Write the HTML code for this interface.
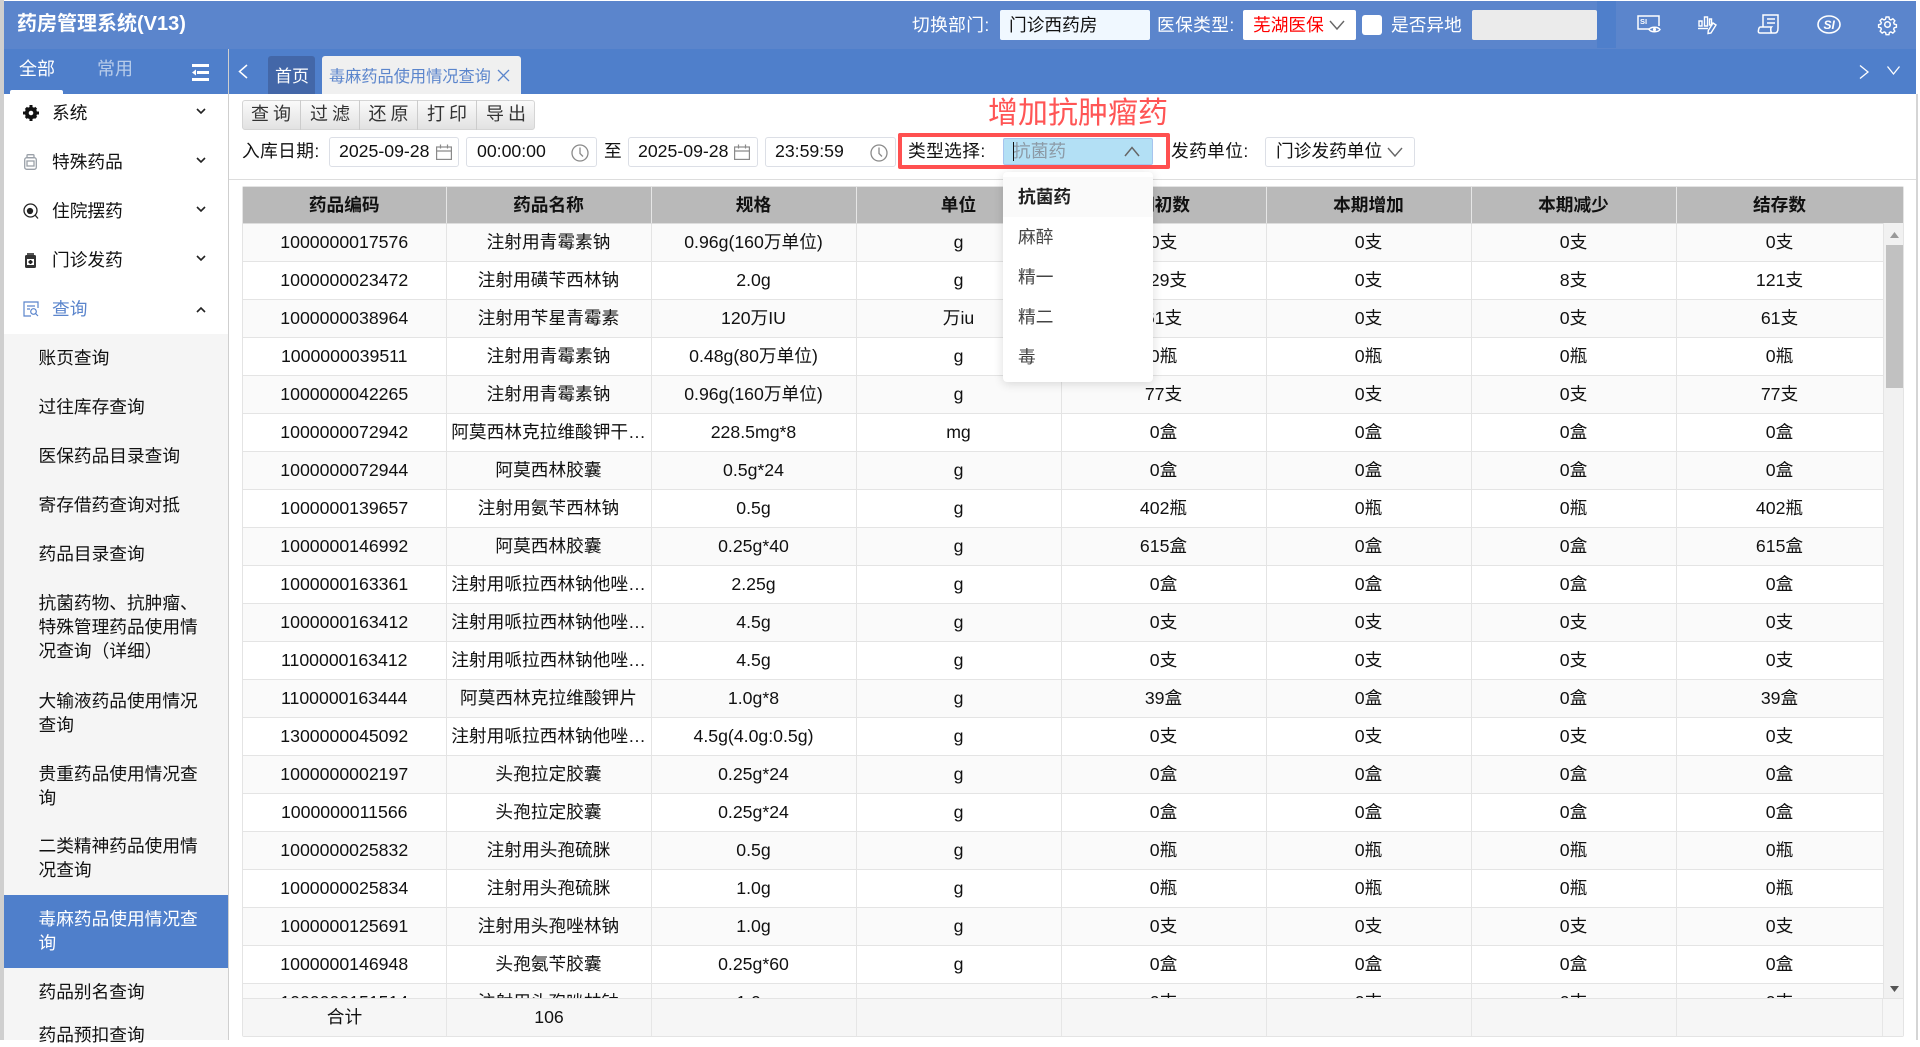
<!DOCTYPE html>
<html lang="zh"><head><meta charset="utf-8"><title>药房管理系统</title>
<style>
*{box-sizing:border-box}
html,body{margin:0;padding:0;width:1920px;height:1040px;overflow:hidden;background:#fff;font-family:"Liberation Sans","Noto Sans CJK SC",sans-serif;font-size:17.7px;color:#111}
.a{position:absolute}
.t{position:absolute;white-space:nowrap;line-height:24px}
.l{letter-spacing:.4px}
.box{position:absolute;background:#fff;border:1px solid #dcdfe6;border-radius:3px}
svg{position:absolute;display:block;overflow:visible}
table{position:absolute;left:243px;top:187px;width:1640px;border-collapse:collapse;table-layout:fixed}
td,th{height:38px;padding:0 2px;text-align:center;border-right:1px solid #e4e4e4;border-bottom:1px solid #e4e4e4;white-space:nowrap;overflow:hidden;font-weight:400;line-height:24px;color:#111}
th{height:36px;background:#b9b9b9;color:#111;font-weight:700;border-right:1px solid #e6e6e6;border-bottom:1px solid #ddd}
tr:nth-child(odd) td{background:#fff}
tr:nth-child(even) td{background:#fafafa}
.btn{position:absolute;top:100px;height:30px;line-height:29px;text-align:center;letter-spacing:4px;text-indent:4px;border-right:1px solid #ccc;color:#333;font-size:18px}
.sub{color:#111;left:38.5px;line-height:24px}
</style></head><body>

<!-- left / right strips -->
<div class="a" style="left:0;top:0;width:4px;height:1040px;background:#cfcfcf"></div>
<div class="a" style="left:1916px;top:94px;width:2px;height:946px;background:#d5d5d5"></div>

<!-- header -->
<div class="a" style="left:4px;top:1px;width:1912px;height:48px;background:#5b85cc"></div>
<div class="a" style="left:1597px;top:1px;width:19px;height:47px;background:#4f7fcb"></div>
<div class="t" style="left:17px;top:12px;font-size:20px;font-weight:700;color:#fff">药房管理系统(V13)</div>
<div class="t l" style="left:912px;top:13px;color:#fff">切换部门:</div>
<div class="a" style="left:1000px;top:10px;width:150px;height:30px;background:#f0f8ff;border-radius:2px"></div>
<div class="t" style="left:1009px;top:13px;color:#111">门诊西药房</div>
<div class="t l" style="left:1157px;top:13px;color:#fff">医保类型:</div>
<div class="a" style="left:1243px;top:10px;width:113px;height:30px;background:#fff;border-radius:2px"></div>
<div class="t" style="left:1253px;top:13px;color:#f00">芜湖医保</div>
<svg style="left:1329px;top:20px" width="16" height="10" viewBox="0 0 16 10"><path d="M1 1l7 8 7-8" fill="none" stroke="#666" stroke-width="1.4"/></svg>
<div class="a" style="left:1362px;top:15px;width:20px;height:20px;background:#fff;border-radius:3px"></div>
<div class="t" style="left:1391px;top:13px;color:#fff">是否异地</div>
<div class="a" style="left:1472px;top:10px;width:125px;height:30px;background:#ebebeb;border-radius:2px"></div>

<!-- header icons -->
<svg style="left:1637px;top:15px" width="24" height="19" viewBox="0 0 24 19" fill="none" stroke="#fff" stroke-width="1.5"><path d="M12 14H1V1h21v10"/><text x="3" y="9" font-size="7.5" font-weight="700" fill="#fff" stroke="none" font-family="Liberation Sans">SI</text><path d="M12 14.5c2-3 9-3 11 0-2 3-9 3-11 0z"/><circle cx="17.5" cy="14.5" r="1.6" fill="#fff" stroke="none"/></svg>
<svg style="left:1698px;top:15px" width="20" height="19" viewBox="0 0 20 19" fill="none" stroke="#fff" stroke-width="1.4"><path d="M1 6h3v5H1zM6.500 2h3v9h-3zM11.500 4h2v6h-2z"/><path d="M0 13.500h10" /><path d="M15 8l3 2-5 8-3 .5.300-3z"/></svg>
<svg style="left:1758px;top:14px" width="21" height="20" viewBox="0 0 21 20" fill="none" stroke="#fff" stroke-width="1.5"><path d="M5 13V1h15v13c0 3-1 5-3 5H2c-1.500 0-2-1-1.500-3 .3-2 1-3 2-3h11c-1 1-1 4 0 6"/><path d="M9 5h8M9 9h8"/></svg>
<svg style="left:1817px;top:15px" width="24" height="19" viewBox="0 0 24 19" fill="none" stroke="#fff" stroke-width="1.6"><ellipse cx="12" cy="9.500" rx="11" ry="8.500"/><text x="6.500" y="14" font-size="12" font-weight="700" font-style="italic" fill="#fff" stroke="none" font-family="Liberation Sans">SI</text></svg>
<svg style="left:1878px;top:15px" width="19" height="19" viewBox="0 0 24 24" fill="none" stroke="#fff" stroke-width="2"><circle cx="12" cy="12" r="3.500"/><path d="M10 1.500h4l.7 3.200 2 .9 2.800-1.700 2.800 2.800-1.700 2.800.9 2 3 .7v3.600l-3 .7-.9 2 1.700 2.800-2.800 2.800-2.800-1.700-2 .9-.7 3h-4l-.7-3-2-.9-2.800 1.700-2.800-2.800 1.700-2.800-.9-2-3-.7v-3.600l3-.7.9-2L1.500 6.700 4.300 3.900l2.800 1.700 2-.9z" transform="translate(1.200 1.200) scale(.9)"/></svg>

<!-- tabs bar -->
<div class="a" style="left:4px;top:49px;width:224px;height:45px;background:#4f7fcb"></div>
<div class="a" style="left:229px;top:49px;width:1687px;height:45px;background:#4f7fcb"></div>
<div class="a" style="left:228px;top:49px;width:1px;height:991px;background:#cfcfcf"></div>
<div class="t" style="left:19px;top:57px;font-size:18px;color:#fff">全部</div>
<div class="t" style="left:97px;top:57px;font-size:18px;color:rgba(255,255,255,.6)">常用</div>
<div class="a" style="left:10px;top:90px;width:53px;height:4px;background:#fff;border-radius:2px 2px 0 0"></div>
<svg style="left:192px;top:64px" width="17" height="17" viewBox="0 0 17 17" fill="#fff"><rect x="0" y="0" width="17" height="3"/><rect x="5" y="7" width="12" height="3"/><rect x="0" y="14" width="17" height="3"/><path d="M4 5.500v6L0 8.500z"/></svg>
<svg style="left:238px;top:64px" width="10" height="15" viewBox="0 0 10 15"><path d="M9 1L1.500 7.500 9 14" fill="none" stroke="#fff" stroke-width="1.500"/></svg>
<div class="a" style="left:268px;top:56px;width:47px;height:38px;background:#4367a8;border-radius:3px 3px 0 0"></div>
<div class="t" style="left:275px;top:65px;font-size:17px;color:#fff">首页</div>
<div class="a" style="left:322px;top:56px;width:199px;height:38px;background:#f0f0f0;border-radius:3px 3px 0 0"></div>
<div class="t" style="left:329px;top:65px;font-size:16.200px;color:#5b85cc">毒麻药品使用情况查询</div>
<svg style="left:497px;top:69px" width="13" height="13" viewBox="0 0 13 13"><path d="M1 1l11 11M12 1L1 12" stroke="#5b85cc" stroke-width="1.300"/></svg>
<svg style="left:1859px;top:65px" width="10" height="14" viewBox="0 0 10 14"><path d="M1 .5L9 7l-8 6.500" fill="none" stroke="#fff" stroke-width="1.300"/></svg>
<svg style="left:1887px;top:66px" width="13" height="9" viewBox="0 0 13 9"><path d="M.5 .5L6.500 8 12.500 .5" fill="none" stroke="#fff" stroke-width="1.300"/></svg>

<!-- sidebar -->
<svg style="left:23px;top:105px" width="16" height="16" viewBox="0 0 16 16"><circle cx="8" cy="8" r="4.200" fill="none" stroke="#111" stroke-width="3.800"/><path d="M6.500 0h3v3h-3zM6.500 13h3v3h-3zM0 6.500h3v3H0zM13 6.500h3v3h-3zM1.800 4l2.200-2.200 2 2-2.200 2.200zM10 12l2.200-2.200 2 2-2.200 2.200zM10 4l2.200-2.200 2 2-2.200 2.200zM1.800 12l2.200-2.200 2 2-2.200 2.200z" fill="#111"/></svg>
<div class="t" style="left:52px;top:101px">系统</div>
<svg style="left:24px;top:154px" width="13" height="16" viewBox="0 0 13 16" fill="none" stroke="#9aa0a8" stroke-width="1.300"><rect x="3" y=".7" width="7" height="3" rx="1"/><rect x=".7" y="3.700" width="11.600" height="11.600" rx="2"/><rect x="3" y="7" width="7" height="5"/></svg>
<div class="t" style="left:52px;top:150px">特殊药品</div>
<svg style="left:23px;top:203px" width="16" height="16" viewBox="0 0 16 16" fill="none" stroke="#222" stroke-width="1.300"><circle cx="7.500" cy="7.500" r="6.500"/><path d="M12 12l3 3.500"/><circle cx="7" cy="8" r="2.500" fill="#222"/></svg>
<div class="t" style="left:52px;top:199px">住院摆药</div>
<svg style="left:25px;top:253px" width="11" height="15" viewBox="0 0 11 15"><rect x="0" y="2" width="11" height="13" rx="1.500" fill="#333"/><rect x="2" y="0" width="7" height="2" fill="#555"/><rect x="2" y="6" width="7" height="6" fill="#fff"/><path d="M4.500 7h2v1h1v2h-1v1h-2v-1h-1V8h1z" fill="#222"/></svg>
<div class="t" style="left:52px;top:248px">门诊发药</div>
<svg style="left:23px;top:301px" width="16" height="16" viewBox="0 0 16 16" fill="none" stroke="#5b85cc" stroke-width="1.200"><path d="M15 7V1H1v14h7"/><path d="M4 5h8M4 8h3"/><circle cx="10.500" cy="10.500" r="2.800"/><path d="M12.500 12.500l2.500 2.500"/></svg>
<div class="t" style="left:52px;top:297px;color:#5b85cc">查询</div>
<svg style="left:196px;top:108px" width="10" height="7" viewBox="0 0 10 7"><path d="M1 1l4 4 4-4" fill="none" stroke="#222" stroke-width="1.600"/></svg>
<svg style="left:196px;top:157px" width="10" height="7" viewBox="0 0 10 7"><path d="M1 1l4 4 4-4" fill="none" stroke="#222" stroke-width="1.600"/></svg>
<svg style="left:196px;top:206px" width="10" height="7" viewBox="0 0 10 7"><path d="M1 1l4 4 4-4" fill="none" stroke="#222" stroke-width="1.600"/></svg>
<svg style="left:196px;top:255px" width="10" height="7" viewBox="0 0 10 7"><path d="M1 1l4 4 4-4" fill="none" stroke="#222" stroke-width="1.600"/></svg>
<svg style="left:196px;top:306px" width="10" height="7" viewBox="0 0 10 7"><path d="M1 6l4-4 4 4" fill="none" stroke="#222" stroke-width="1.600"/></svg>

<div class="a" style="left:4px;top:334px;width:224px;height:706px;background:#f5f5f5;overflow:hidden">
<div class="a" style="left:0;top:561px;width:224px;height:73px;background:#4f7fcb"></div>
</div>
<div class="t sub" style="top:346px">账页查询</div>
<div class="t sub" style="top:395px">过往库存查询</div>
<div class="t sub" style="top:444px">医保药品目录查询</div>
<div class="t sub" style="top:493px">寄存借药查询对抵</div>
<div class="t sub" style="top:542px">药品目录查询</div>
<div class="t sub" style="top:591px">抗菌药物、抗肿瘤、<br>特殊管理药品使用情<br>况查询（详细）</div>
<div class="t sub" style="top:689px">大输液药品使用情况<br>查询</div>
<div class="t sub" style="top:762px">贵重药品使用情况查<br>询</div>
<div class="t sub" style="top:834px">二类精神药品使用情<br>况查询</div>
<div class="t sub" style="top:907px;color:#fff">毒麻药品使用情况查<br>询</div>
<div class="t sub" style="top:980px">药品别名查询</div>
<div class="t sub" style="top:1023px">药品预扣查询</div>

<!-- toolbar -->
<div class="a" style="left:242px;top:100px;width:293px;height:30px;border:1px solid #d5d5d5;border-radius:3px;background:linear-gradient(#fafafa,#e2e2e2)"></div>
<div class="btn" style="left:242px;width:59px">查询</div>
<div class="btn" style="left:301px;width:59px">过滤</div>
<div class="btn" style="left:360px;width:58px">还原</div>
<div class="btn" style="left:418px;width:59px">打印</div>
<div class="btn" style="left:477px;width:58px;border-right:0">导出</div>

<!-- filters -->
<div class="t l" style="left:242px;top:139px">入库日期:</div>
<div class="box" style="left:329px;top:137px;width:130px;height:30px"></div>
<div class="t" style="left:339px;top:139px">2025-09-28</div>
<svg style="left:436px;top:144px" width="16" height="16" viewBox="0 0 16 16" fill="none" stroke="#8a8a8a" stroke-width="1.200"><rect x=".6" y="3" width="14.800" height="12.400"/><path d="M.6 7h14.800M4.500 .5v4M11.500 .5v4"/></svg>
<div class="box" style="left:466px;top:137px;width:131px;height:30px"></div>
<div class="t" style="left:477px;top:139px">00:00:00</div>
<svg style="left:571px;top:144px" width="18" height="18" viewBox="0 0 18 18" fill="none" stroke="#8a8a8a" stroke-width="1.300"><circle cx="9" cy="9" r="8"/><path d="M9 3.500V9.500l3 3"/></svg>
<div class="t" style="left:604px;top:139px">至</div>
<div class="box" style="left:628px;top:137px;width:130px;height:30px"></div>
<div class="t" style="left:638px;top:139px">2025-09-28</div>
<svg style="left:734px;top:144px" width="16" height="16" viewBox="0 0 16 16" fill="none" stroke="#8a8a8a" stroke-width="1.200"><rect x=".6" y="3" width="14.800" height="12.400"/><path d="M.6 7h14.800M4.500 .5v4M11.500 .5v4"/></svg>
<div class="box" style="left:765px;top:137px;width:131px;height:30px"></div>
<div class="t" style="left:775px;top:139px">23:59:59</div>
<svg style="left:870px;top:144px" width="18" height="18" viewBox="0 0 18 18" fill="none" stroke="#8a8a8a" stroke-width="1.300"><circle cx="9" cy="9" r="8"/><path d="M9 3.500V9.500l3 3"/></svg>

<div class="t l" style="left:908px;top:139px">类型选择:</div>
<div class="a" style="left:1003px;top:138px;width:150px;height:27px;background:#b3e0f5;border:1px solid #a6c4ee;border-radius:2px"></div>
<div class="t" style="left:1013px;top:139px;color:#8c9aa6">抗菌药</div>
<div class="a" style="left:1013px;top:142px;width:1px;height:19px;background:#111"></div>
<svg style="left:1124px;top:146px" width="16" height="11" viewBox="0 0 16 11"><path d="M1 10l7-8.500 7 8.500" fill="none" stroke="#666" stroke-width="1.500"/></svg>
<div class="a" style="left:898px;top:133px;width:272px;height:36px;border:4px solid #ff5050;border-radius:2px"></div>
<div class="t" style="left:988px;top:99px;font-size:30px;line-height:30px;color:#f55">增加抗肿瘤药</div>

<div class="t l" style="left:1171px;top:139px">发药单位:</div>
<div class="box" style="left:1265px;top:137px;width:150px;height:30px"></div>
<div class="t" style="left:1276px;top:139px">门诊发药单位</div>
<svg style="left:1387px;top:147px" width="16" height="10" viewBox="0 0 16 10"><path d="M1 1l7 8 7-8" fill="none" stroke="#666" stroke-width="1.400"/></svg>

<div class="a" style="left:229px;top:179px;width:1687px;height:1px;background:#ddd"></div>

<!-- table -->
<div class="a" style="left:242px;top:186px;width:1662px;height:851px;border:1px solid #e4e4e4;border-radius:2px"></div>
<div class="a" style="left:243px;top:187px;width:1640px;height:811px;overflow:hidden">
<table style="left:0;top:0">
<colgroup><col style="width:203px"><col style="width:205px"><col style="width:205px"><col style="width:205px"><col style="width:205px"><col style="width:205px"><col style="width:205px"><col style="width:207px"></colgroup>
<tr><th>药品编码</th><th>药品名称</th><th>规格</th><th>单位</th><th>期初数</th><th>本期增加</th><th>本期减少</th><th>结存数</th></tr>
<tr><td>1000000017576</td><td>注射用青霉素钠</td><td>0.96g(160万单位)</td><td>g</td><td>0支</td><td>0支</td><td>0支</td><td>0支</td></tr>
<tr><td>1000000023472</td><td>注射用磺苄西林钠</td><td>2.0g</td><td>g</td><td>129支</td><td>0支</td><td>8支</td><td>121支</td></tr>
<tr><td>1000000038964</td><td>注射用苄星青霉素</td><td>120万IU</td><td>万iu</td><td>61支</td><td>0支</td><td>0支</td><td>61支</td></tr>
<tr><td>1000000039511</td><td>注射用青霉素钠</td><td>0.48g(80万单位)</td><td>g</td><td>0瓶</td><td>0瓶</td><td>0瓶</td><td>0瓶</td></tr>
<tr><td>1000000042265</td><td>注射用青霉素钠</td><td>0.96g(160万单位)</td><td>g</td><td>77支</td><td>0支</td><td>0支</td><td>77支</td></tr>
<tr><td>1000000072942</td><td>阿莫西林克拉维酸钾干…</td><td>228.5mg*8</td><td>mg</td><td>0盒</td><td>0盒</td><td>0盒</td><td>0盒</td></tr>
<tr><td>1000000072944</td><td>阿莫西林胶囊</td><td>0.5g*24</td><td>g</td><td>0盒</td><td>0盒</td><td>0盒</td><td>0盒</td></tr>
<tr><td>1000000139657</td><td>注射用氨苄西林钠</td><td>0.5g</td><td>g</td><td>402瓶</td><td>0瓶</td><td>0瓶</td><td>402瓶</td></tr>
<tr><td>1000000146992</td><td>阿莫西林胶囊</td><td>0.25g*40</td><td>g</td><td>615盒</td><td>0盒</td><td>0盒</td><td>615盒</td></tr>
<tr><td>1000000163361</td><td>注射用哌拉西林钠他唑…</td><td>2.25g</td><td>g</td><td>0盒</td><td>0盒</td><td>0盒</td><td>0盒</td></tr>
<tr><td>1000000163412</td><td>注射用哌拉西林钠他唑…</td><td>4.5g</td><td>g</td><td>0支</td><td>0支</td><td>0支</td><td>0支</td></tr>
<tr><td>1100000163412</td><td>注射用哌拉西林钠他唑…</td><td>4.5g</td><td>g</td><td>0支</td><td>0支</td><td>0支</td><td>0支</td></tr>
<tr><td>1100000163444</td><td>阿莫西林克拉维酸钾片</td><td>1.0g*8</td><td>g</td><td>39盒</td><td>0盒</td><td>0盒</td><td>39盒</td></tr>
<tr><td>1300000045092</td><td>注射用哌拉西林钠他唑…</td><td>4.5g(4.0g:0.5g)</td><td>g</td><td>0支</td><td>0支</td><td>0支</td><td>0支</td></tr>
<tr><td>1000000002197</td><td>头孢拉定胶囊</td><td>0.25g*24</td><td>g</td><td>0盒</td><td>0盒</td><td>0盒</td><td>0盒</td></tr>
<tr><td>1000000011566</td><td>头孢拉定胶囊</td><td>0.25g*24</td><td>g</td><td>0盒</td><td>0盒</td><td>0盒</td><td>0盒</td></tr>
<tr><td>1000000025832</td><td>注射用头孢硫脒</td><td>0.5g</td><td>g</td><td>0瓶</td><td>0瓶</td><td>0瓶</td><td>0瓶</td></tr>
<tr><td>1000000025834</td><td>注射用头孢硫脒</td><td>1.0g</td><td>g</td><td>0瓶</td><td>0瓶</td><td>0瓶</td><td>0瓶</td></tr>
<tr><td>1000000125691</td><td>注射用头孢唑林钠</td><td>1.0g</td><td>g</td><td>0支</td><td>0支</td><td>0支</td><td>0支</td></tr>
<tr><td>1000000146948</td><td>头孢氨苄胶囊</td><td>0.25g*60</td><td>g</td><td>0盒</td><td>0盒</td><td>0盒</td><td>0盒</td></tr>
<tr><td>1000000151514</td><td>注射用头孢唑林钠</td><td>1.0g</td><td>g</td><td>0支</td><td>0支</td><td>0支</td><td>0支</td></tr>
</table>
</div>

<!-- scrollbar -->
<div class="a" style="left:1883px;top:187px;width:20px;height:36px;background:#b9b9b9"></div>
<div class="a" style="left:1883px;top:223px;width:20px;height:775px;background:#f1f1f1;border-left:1px solid #e4e4e4"></div>
<div class="a" style="left:1886px;top:245px;width:17px;height:143px;background:#c1c1c1"></div>
<svg style="left:1890px;top:232px" width="9" height="6" viewBox="0 0 9 6"><path d="M4.500 0L9 6H0z" fill="#999"/></svg>
<svg style="left:1890px;top:986px" width="9" height="6" viewBox="0 0 9 6"><path d="M4.500 6L9 0H0z" fill="#555"/></svg>

<!-- footer -->
<div class="a" style="left:243px;top:998px;width:1660px;height:38px;background:#f6f6f6;border-top:1px solid #e4e4e4;line-height:36px;text-align:center">
<div class="a" style="left:0;top:0;width:203px">合计</div>
<div class="a" style="left:203px;top:0;width:205px;border-left:1px solid #e6e6e6;height:37px">106</div>
<div class="a" style="left:613px;top:0;width:1px;height:37px;background:#e6e6e6"></div>
<div class="a" style="left:818px;top:0;width:1px;height:37px;background:#e6e6e6"></div>
<div class="a" style="left:1023px;top:0;width:1px;height:37px;background:#e6e6e6"></div>
<div class="a" style="left:1228px;top:0;width:1px;height:37px;background:#e6e6e6"></div>
<div class="a" style="left:1433px;top:0;width:1px;height:37px;background:#e6e6e6"></div>
<div class="a" style="left:408px;top:0;width:1px;height:37px;background:#e6e6e6"></div>
<div class="a" style="left:1639px;top:0;width:1px;height:37px;background:#e6e6e6"></div>
</div>

<!-- dropdown -->
<div class="a" style="left:1003px;top:172px;width:150px;height:210px;background:#fff;border-radius:4px;box-shadow:0 2px 10px rgba(0,0,0,.14)"></div>
<div class="a" style="left:1003px;top:177px;width:150px;height:40px;background:#fafafa"></div>
<div class="t" style="left:1018px;top:185px;font-weight:700;color:#222">抗菌药</div>
<div class="t" style="left:1018px;top:225px;color:#444">麻醉</div>
<div class="t" style="left:1018px;top:265px;color:#444">精一</div>
<div class="t" style="left:1018px;top:305px;color:#444">精二</div>
<div class="t" style="left:1018px;top:345px;color:#444">毒</div>

</body></html>
